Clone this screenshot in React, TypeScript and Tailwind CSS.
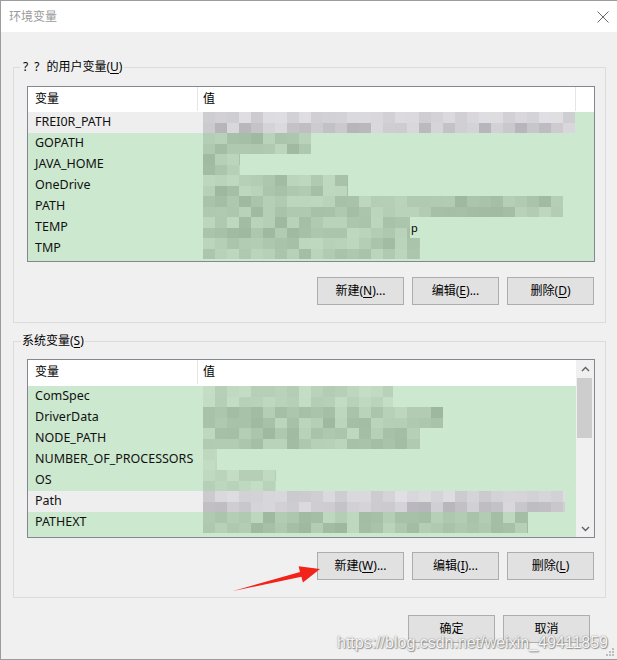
import React from "react";

type Row = { name: string; width: number; selected?: boolean; light?: boolean; extra?: string };

const userRows: Row[] = [
  { name: "FREI0R_PATH", width: 372, selected: true },
  { name: "GOPATH", width: 108 },
  { name: "JAVA_HOME", width: 37 },
  { name: "OneDrive", width: 145 },
  { name: "PATH", width: 360 },
  { name: "TEMP", width: 207, extra: "p" },
  { name: "TMP", width: 217 },
];

const systemRows: Row[] = [
  { name: "ComSpec", width: 190, light: true },
  { name: "DriverData", width: 240 },
  { name: "NODE_PATH", width: 217 },
  { name: "NUMBER_OF_PROCESSORS", width: 14, light: true },
  { name: "OS", width: 73, light: true },
  { name: "Path", width: 362, selected: true },
  { name: "PATHEXT", width: 325 },
];

const hash = (n: number) => {
  const x = Math.sin(n * 12.9898 + 78.233) * 43758.5453;
  return x - Math.floor(x);
};

// pixelated censor block over the values
const Mosaic = ({ width, seed, gray, light }: { width: number; seed: number; gray?: boolean; light?: boolean }) => {
  const cols = Math.ceil(width / 12);
  const lo = gray ? [236, 235, 238] : [204, 230, 206];
  const hi = gray ? [172, 170, 176] : [150, 176, 152];
  return (
    <div className="flex h-full flex-col overflow-hidden" style={{ width }}>
      {[0, 1].map((r) => (
        <div key={r} className="flex h-1/2">
          {Array.from({ length: cols }).map((_, c) => {
            let t = 0.25 + hash(seed * 97 + r * 31 + c * 7) * 0.6;
            if (light) t *= 0.55;
            if (gray && r === 0) t *= 0.6;
            const col = lo.map((v, i) => Math.round(v + (hi[i] - v) * t));
            return (
              <div
                key={c}
                className="h-full w-[12px] shrink-0"
                style={{ background: `rgb(${col[0]},${col[1]},${col[2]})` }}
              />
            );
          })}
        </div>
      ))}
    </div>
  );
};

const Underlined = ({ label, k, tail = "" }: { label: string; k: string; tail?: string }) => (
  <>
    {label}(<span className="underline underline-offset-2">{k}</span>){tail}
  </>
);

const Btn = ({ children }: { children: React.ReactNode }) => (
  <div className="flex h-[28px] w-[87px] items-center justify-center border border-[#adadad] bg-[#e1e1e1] text-[12px]">
    {children}
  </div>
);

const Chevron = ({ down }: { down?: boolean }) => (
  <svg width="9" height="6" viewBox="0 0 9 6">
    <polyline
      points={down ? "1,1 4.5,4.5 8,1" : "1,5 4.5,1.5 8,5"}
      fill="none"
      stroke="#606060"
      strokeWidth="1.4"
    />
  </svg>
);

const VarList = ({ rows, seed, scroll }: { rows: Row[]; seed: number; scroll?: boolean }) => (
  <div className={`flex border border-[#828790] bg-[#cce8cf] ${scroll ? "h-[179px]" : "h-[176px]"}`}>
    <div className="flex flex-1 flex-col">
      <div className={`flex shrink-0 bg-white ${scroll ? "h-[26px] pb-[2px]" : "h-[25px] pb-[1px]"}`}>
        <div className="flex w-[170px] items-center border-r border-[#e5e5e5] pl-[7px]">变量</div>
        <div className={`flex items-center pl-[5px] ${scroll ? "flex-1" : "w-[378px] border-r border-[#e5e5e5]"}`}>
          值
        </div>
      </div>
      {rows.map((row, i) => (
        <div key={row.name} className="flex h-[21px] shrink-0">
          <div
            className={`flex w-[175px] items-center pl-[7px] text-[12.5px] text-[#111] ${
              row.selected ? "bg-[#eeeeee]" : ""
            }`}
          >
            {row.name}
          </div>
          <Mosaic width={row.width} seed={seed + i} gray={row.selected} light={row.light} />
          {row.extra && <span className="ml-[1px] text-[11px] leading-[21px]">{row.extra}</span>}
        </div>
      ))}
    </div>
    {scroll && (
      <div className="flex w-[18px] flex-col bg-[#f0f0f0]">
        <div className="flex h-[17px] items-center justify-center">
          <Chevron />
        </div>
        <div className="flex-1">
          <div className="ml-[1px] mt-[1px] h-[60px] w-[15px] bg-[#cdcdcd]" />
        </div>
        <div className="flex h-[17px] items-center justify-center">
          <Chevron down />
        </div>
      </div>
    )}
  </div>
);

export default function App() {
  return (
    <div className="relative h-[660px] w-[617px] overflow-hidden border-b border-l border-t border-[#9c9c9c] bg-[#f0f0f0] font-['Noto_Sans','Noto_Sans_CJK_SC',sans-serif] text-[12px] text-black">
      <div className="flex h-[31px] items-center justify-between bg-white pl-[8px] pr-[8px]">
        <span className="text-[12px] text-[#9a9a9a]">环境变量</span>
        <svg width="12" height="12" viewBox="0 0 12 12">
          <path d="M0.5 0.5 L11.5 11.5 M11.5 0.5 L0.5 11.5" stroke="#666" strokeWidth="1" />
        </svg>
      </div>

      <fieldset className="ml-[12px] mr-[11px] mt-[27px] border border-[#dcdcdc] pb-[17px] pl-[13px] pr-[10px]">
        <legend className="ml-[-7px] px-[2px] leading-[16px]">
          <span className="ml-[1px] mr-[6px]">?</span>
          <span className="mr-[7px]">?</span>
          的用户变量(<span className="underline underline-offset-2">U</span>)
        </legend>
        <div className="mt-[11px]">
          <VarList rows={userRows} seed={3} />
        </div>
        <div className="mt-[15px] flex justify-end gap-[8px] pr-[1px]">
          <Btn>
            <Underlined label="新建" k="N" tail="..." />
          </Btn>
          <Btn>
            <Underlined label="编辑" k="E" tail="..." />
          </Btn>
          <Btn>
            <Underlined label="删除" k="D" />
          </Btn>
        </div>
      </fieldset>

      <fieldset className="ml-[12px] mr-[11px] mt-[10px] border border-[#dcdcdc] pb-[17px] pl-[13px] pr-[10px]">
        <legend className="ml-[-6px] px-[1px] leading-[16px]">
          系统变量(<span className="underline underline-offset-2">S</span>)
        </legend>
        <div className="mt-[10px]">
          <VarList rows={systemRows} seed={21} scroll />
        </div>
        <div className="mt-[14px] flex justify-end gap-[8px] pr-[1px]">
          <Btn>
            <Underlined label="新建" k="W" tail="..." />
          </Btn>
          <Btn>
            <Underlined label="编辑" k="I" tail="..." />
          </Btn>
          <Btn>
            <Underlined label="删除" k="L" />
          </Btn>
        </div>
      </fieldset>

      <div className="mr-[27px] mt-[17px] flex justify-end gap-[8px]">
        <Btn>确定</Btn>
        <Btn>取消</Btn>
      </div>

      {/* annotation arrow pointing at the system 新建 button */}
      <svg className="absolute left-[225px] top-[555px]" width="100" height="40" viewBox="225 555 100 40">
        <polygon
          points="232,590 300.4,575.8 301.9,581.6 319,568 297.6,565.2 299,571"
          fill="#f2231b"
        />
      </svg>

      <div className="absolute left-[336px] top-[630px] font-['Liberation_Sans',sans-serif] text-[16px] text-[#f4f4f4] [text-shadow:0_0_1.5px_#777,1px_1px_1px_#999]">
        https://blog.csdn.net/weixin_49411859
      </div>

      <svg className="absolute bottom-[2px] right-[2px]" width="10" height="10" viewBox="0 0 10 10">
        <rect x="7" y="1" width="2" height="2" fill="#bdbdbd" />
        <rect x="4" y="4" width="2" height="2" fill="#bdbdbd" />
        <rect x="7" y="4" width="2" height="2" fill="#bdbdbd" />
        <rect x="1" y="7" width="2" height="2" fill="#bdbdbd" />
        <rect x="4" y="7" width="2" height="2" fill="#bdbdbd" />
        <rect x="7" y="7" width="2" height="2" fill="#bdbdbd" />
      </svg>
    </div>
  );
}
